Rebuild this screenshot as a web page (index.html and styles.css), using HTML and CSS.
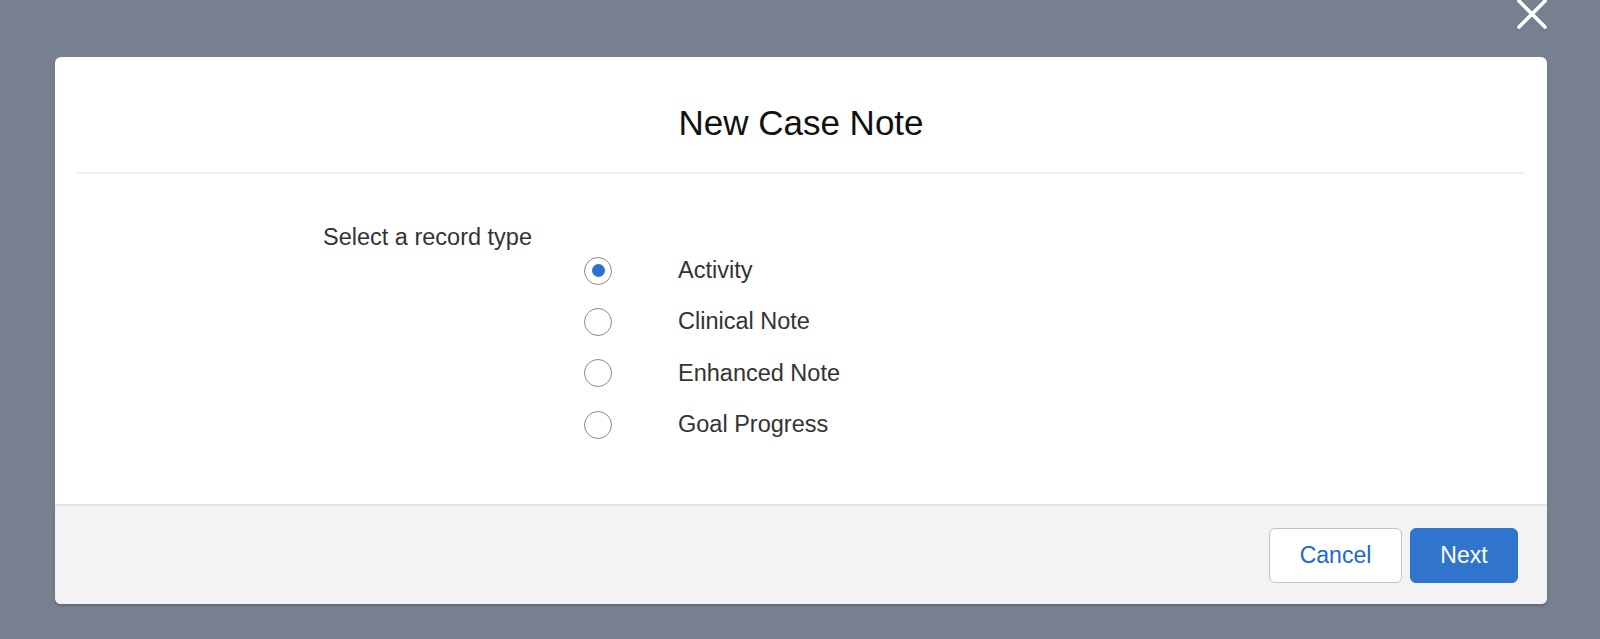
FILE: index.html
```html
<!DOCTYPE html>
<html lang="en">
<head>
    <meta charset="UTF-8">
    <meta name="viewport" content="width=device-width, initial-scale=1.0">
    <title>New Case Note</title>
    <link rel="stylesheet" href="styles.css">
</head>
<body>
    <button class="cerrar" aria-label="Close">
        <svg viewBox="0 0 32 32" width="32" height="32">
            <path d="M3 3 L29 29 M29 3 L3 29" stroke="#fff" stroke-width="3.6" stroke-linecap="round" fill="none"/>
        </svg>
    </button>
    <div class="modal">
        <div class="cabecera">
            <h2 class="titulo">New Case Note</h2>
        </div>
        <div class="cuerpo">
            <div class="leyenda">Select a record type</div>
            <div class="opciones">
                <label class="opcion">
                    <span class="radio marcado"></span>
                    <span class="texto">Activity</span>
                </label>
                <label class="opcion">
                    <span class="radio"></span>
                    <span class="texto">Clinical Note</span>
                </label>
                <label class="opcion">
                    <span class="radio"></span>
                    <span class="texto">Enhanced Note</span>
                </label>
                <label class="opcion">
                    <span class="radio"></span>
                    <span class="texto">Goal Progress</span>
                </label>
            </div>
        </div>
        <div class="pie">
            <button class="boton neutro">Cancel</button>
            <button class="boton marca">Next</button>
        </div>
    </div>
</body>
</html>
```

FILE: styles.css
```css
* {
    font-family: 'Liberation Sans', Arial, sans-serif;
    box-sizing: border-box;
}
body {
    margin: 0;
    height: 639px;
    overflow: hidden;
    background-color: #77808e;
}
.cerrar {
    position: absolute;
    top: -2px;
    left: 1516px;
    padding: 0;
    border: none;
    background: none;
    width: 32px;
    height: 32px;
}
.cerrar svg {
    display: block;
}
.modal {
    width: 1492px;
    margin: 57px 0 0 55px;
    background-color: white;
    border-radius: 6px;
    box-shadow: 0 2px 3px rgba(0, 0, 0, 0.18);
}
.cabecera {
    margin: 0 22px;
    padding: 48px 0 32px;
    border-bottom: 2px solid #f0f0f0;
    text-align: center;
}
.titulo {
    margin: 0;
    font-size: 35px;
    line-height: 35px;
    font-weight: normal;
    color: #111;
}
.cuerpo {
    display: grid;
    grid-template-columns: 261px 1fr;
    padding: 48px 0 54px 268px;
    color: #333;
}
.leyenda {
    font-size: 23.5px;
    line-height: 31px;
}
.opciones {
    padding-top: 23px;
}
.opcion {
    display: flex;
    align-items: center;
    height: 51.33px;
}
.radio {
    width: 28px;
    height: 28px;
    border: 1px solid #8a8a8a;
    border-radius: 50%;
    background-color: white;
    display: flex;
    align-items: center;
    justify-content: center;
}
.marcado::after {
    content: "";
    width: 13px;
    height: 13px;
    border-radius: 50%;
    background-color: #2e70d2;
}
.texto {
    margin-left: 66px;
    font-size: 23.5px;
    line-height: 31px;
}
.pie {
    display: flex;
    justify-content: flex-end;
    gap: 8px;
    padding: 22px 29px 21px;
    border-top: 2px solid #e5e5e5;
    background-color: #f3f3f3;
    border-radius: 0 0 6px 6px;
}
.boton {
    height: 55px;
    padding: 0;
    border-radius: 6px;
    font-size: 23px;
}
.neutro {
    width: 133px;
    border: 1px solid #c3c3c3;
    background-color: white;
    color: #1b68cf;
}
.marca {
    width: 108px;
    border: 1px solid #3174ce;
    background-color: #3174ce;
    color: white;
}
```
